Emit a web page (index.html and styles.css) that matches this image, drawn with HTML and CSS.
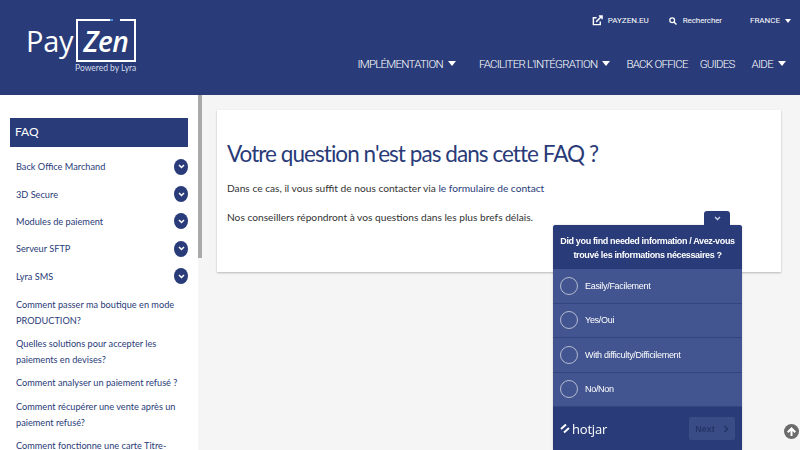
FILE: index.html
```html
<!DOCTYPE html>
<html lang="fr">

<head>
    <meta charset="UTF-8">
    <meta name="viewport" content="width=device-width, initial-scale=1.0">
    <title>PayZen - FAQ</title>
    <link rel="stylesheet" href="styles.css">
</head>

<body>
    <header class="site-header">
        <a class="logo" href="#">
            <span class="logo-pay">Pay</span>
            <span class="logo-box">
                <svg class="logo-frame" width="60" height="43" viewBox="0 0 60 43">
                    <path d="M34 1H1V42H59V1H44" fill="none" stroke="#fff" stroke-width="2" />
                    <path d="M34 1H37" stroke="#4a90d9" stroke-width="2" />
                </svg>
                <span class="logo-zen">Zen</span>
            </span>
            <span class="logo-sub">Powered by Lyra</span>
        </a>

        <div class="header-right">
            <div class="top-links">
                <a class="top-link payzen-link" href="#">
                    <svg width="11" height="11" viewBox="0 0 12 12">
                        <path d="M9 7V10.5H1.5V3H5" fill="none" stroke="#fff" stroke-width="1.6" />
                        <path d="M4.5 7.5L10 2M7.5 1H11V4.5" fill="none" stroke="#fff" stroke-width="1.6" />
                    </svg>
                    PAYZEN.EU
                </a>
                <a class="top-link search-link" href="#">
                    <svg width="8" height="8" viewBox="0 0 10 10">
                        <circle cx="4" cy="4" r="3" fill="none" stroke="#fff" stroke-width="1.6" />
                        <path d="M6.2 6.2L9.3 9.3" stroke="#fff" stroke-width="1.8" />
                    </svg>
                    Rechercher
                </a>
                <a class="top-link lang-link" href="#">FRANCE <span class="caret small"></span></a>
            </div>
            <nav class="main-nav">
                <a href="#" class="nav-impl">IMPLÉMENTATION <span class="caret"></span></a>
                <a href="#" class="nav-fac">FACILITER L'INTÉGRATION <span class="caret"></span></a>
                <a href="#" class="nav-back">BACK OFFICE</a>
                <a href="#" class="nav-guides">GUIDES</a>
                <a href="#">AIDE <span class="caret"></span></a>
            </nav>
        </div>
    </header>

    <div class="page">
        <aside class="sidebar">
            <h3 class="side-title">FAQ</h3>
            <ul class="side-cats">
                <li>Back Office Marchand <span class="round-btn"><svg width="7" height="5" viewBox="0 0 7 5"><path d="M1 1L3.5 3.5L6 1" fill="none" stroke="#fff" stroke-width="1.5" /></svg></span></li>
                <li>3D Secure <span class="round-btn"><svg width="7" height="5" viewBox="0 0 7 5"><path d="M1 1L3.5 3.5L6 1" fill="none" stroke="#fff" stroke-width="1.5" /></svg></span></li>
                <li>Modules de paiement <span class="round-btn"><svg width="7" height="5" viewBox="0 0 7 5"><path d="M1 1L3.5 3.5L6 1" fill="none" stroke="#fff" stroke-width="1.5" /></svg></span></li>
                <li>Serveur SFTP <span class="round-btn"><svg width="7" height="5" viewBox="0 0 7 5"><path d="M1 1L3.5 3.5L6 1" fill="none" stroke="#fff" stroke-width="1.5" /></svg></span></li>
                <li>Lyra SMS <span class="round-btn"><svg width="7" height="5" viewBox="0 0 7 5"><path d="M1 1L3.5 3.5L6 1" fill="none" stroke="#fff" stroke-width="1.5" /></svg></span></li>
            </ul>
            <ul class="side-links">
                <li>Comment passer ma boutique en mode PRODUCTION?</li>
                <li>Quelles solutions pour accepter les paiements en devises?</li>
                <li>Comment analyser un paiement refusé ?</li>
                <li>Comment récupérer une vente après un paiement refusé?</li>
                <li>Comment fonctionne une carte Titre-Restaurant ?</li>
            </ul>
        </aside>
        <div class="side-scroll"><div class="side-thumb"></div></div>

        <main class="content">
            <section class="card">
                <h1>Votre question n'est pas dans cette FAQ ?</h1>
                <p>Dans ce cas, il vous suffit de nous contacter via <a href="#">le formulaire de contact</a></p>
                <p>Nos conseillers répondront à vos questions dans les plus brefs délais.</p>
            </section>
        </main>
    </div>

    <div class="poll">
        <div class="poll-tab">
            <svg width="7" height="5" viewBox="0 0 7 5"><path d="M1 1L3.5 3.5L6 1" fill="none" stroke="#c9d2e6" stroke-width="1.4" /></svg>
        </div>
        <div class="poll-question">Did you find needed information / Avez-vous trouvé les informations nécessaires ?</div>
        <div class="poll-option"><span class="radio"></span>Easily/Facilement</div>
        <div class="poll-option"><span class="radio"></span>Yes/Oui</div>
        <div class="poll-option"><span class="radio"></span>With difficulty/Difficilement</div>
        <div class="poll-option"><span class="radio"></span>No/Non</div>
        <div class="poll-footer">
            <span class="hotjar">
                <svg width="10" height="11" viewBox="0 0 10 11">
                    <path d="M1 6L6 1.5M4 9.5L9 5" fill="none" stroke="#fff" stroke-width="2" />
                </svg>
                hotjar
            </span>
            <span class="poll-next">Next
                <svg width="6" height="8" viewBox="0 0 6 8"><path d="M1.5 1L4.5 4L1.5 7" fill="none" stroke="#223468" stroke-width="1.6" /></svg>
            </span>
        </div>
    </div>

    <a class="to-top" href="#">
        <svg width="15" height="15" viewBox="0 0 15 15">
            <path d="M7.5 3L12 7.5L10.6 8.9L8.5 6.9V12H6.5V6.9L4.4 8.9L3 7.5Z" fill="#fff" />
        </svg>
    </a>
</body>

</html>
```
FILE: styles.css
```css
* {
    box-sizing: border-box;
}

html,
body {
    height: 100%;
}

body {
    margin: 0;
    height: 450px;
    overflow: hidden;
    font-family: "Lato", "Open Sans", sans-serif;
    background-color: #f5f5f5;
    color: #333;
}

a {
    color: inherit;
    text-decoration: none;
}

ul {
    list-style: none;
    margin: 0;
    padding: 0;
}

.site-header {
    height: 95px;
    background-color: #293b78;
    color: #fff;
    display: flex;
    justify-content: space-between;
}

.logo {
    position: relative;
    display: flex;
    align-items: flex-start;
    width: 110px;
    height: 76px;
    margin: 19px 0 0 26px;
}

.logo-pay {
    font-family: "Open Sans", sans-serif;
    font-weight: 500;
    font-size: 29px;
    letter-spacing: -0.3px;
    line-height: 40px;
    margin-top: 2px;
    width: 50px;
}

.logo-box {
    position: relative;
    width: 60px;
    height: 43px;
    display: flex;
    justify-content: center;
}

.logo-frame {
    position: absolute;
    left: 0;
    top: 0;
}

.logo-zen {
    font-family: "Open Sans", sans-serif;
    font-style: italic;
    font-weight: 600;
    font-size: 28px;
    letter-spacing: -0.5px;
    line-height: 36px;
    position: relative;
    margin-top: 4px;
}

.logo-sub {
    position: absolute;
    left: 49px;
    top: 43px;
    font-size: 8.5px;
    line-height: 12px;
    color: #d5daea;
    white-space: nowrap;
}

.header-right {
    display: flex;
    flex-direction: column;
    align-items: flex-end;
    padding-right: 9px;
}

.top-links {
    display: flex;
    align-items: center;
    height: 21px;
    margin-top: 10px;
    font-family: "Roboto", sans-serif;
    font-size: 8px;
}

.top-link {
    display: flex;
    align-items: center;
}

.payzen-link svg {
    margin-right: 5px;
}

.payzen-link {
    margin-right: 20px;
}

.search-link svg {
    margin-right: 6px;
}

.search-link {
    margin-right: 28px;
    letter-spacing: -0.1px;
}

.lang-link .caret {
    margin-left: 5px;
}

.main-nav {
    display: flex;
    align-items: center;
    margin-top: 21px;
    margin-right: 5px;
    height: 24px;
    font-family: "Roboto", sans-serif;
    font-weight: 300;
    font-size: 11.5px;
    letter-spacing: -0.75px;
    white-space: nowrap;
}

.nav-impl {
    margin-right: 23px;
}

.nav-fac {
    margin-right: 16px;
}

.nav-back {
    margin-right: 12px;
}

.nav-guides {
    margin-right: 17px;
}

.caret {
    display: inline-block;
    width: 0;
    height: 0;
    margin-left: 3px;
    vertical-align: 2px;
    border-left: 4.5px solid transparent;
    border-right: 4.5px solid transparent;
    border-top: 5px solid #fff;
}

.caret.small {
    border-left-width: 3.5px;
    border-right-width: 3.5px;
    border-top-width: 4px;
    vertical-align: 1px;
}

.page {
    display: flex;
    height: 355px;
}

.sidebar {
    width: 198px;
    height: 355px;
    overflow: hidden;
    background-color: #fff;
    padding: 23px 10px 0;
}

.side-title {
    margin: 0;
    height: 29px;
    line-height: 28px;
    padding-left: 5px;
    background-color: #293b78;
    color: #fff;
    font-size: 12px;
    font-weight: 400;
}

.side-cats {
    margin-top: 6px;
}

.side-cats li {
    display: flex;
    justify-content: space-between;
    align-items: center;
    height: 27.4px;
    padding-left: 6px;
    font-size: 9.2px;
    color: #293b78;
}

.round-btn {
    width: 14px;
    height: 16px;
    border-radius: 50%;
    background-color: #293b78;
    display: flex;
    align-items: center;
    justify-content: center;
}

.side-links {
    padding: 0 10px 0 6px;
    margin-top: 7px;
    font-size: 9.2px;
    line-height: 15.8px;
    color: #293b78;
}

.side-links li {
    margin-bottom: 7.6px;
}

.side-scroll {
    width: 19px;
    flex-shrink: 0;
    background-color: #f5f5f5;
}

.side-thumb {
    width: 4px;
    height: 163px;
    background-color: #a9a9a9;
}

.content {
    flex: 1;
    padding: 15px 19px 0 0;
}

.card {
    height: 162px;
    background-color: #fff;
    box-shadow: 0 1px 2px rgba(0, 0, 0, 0.25);
    padding: 29px 10px 0;
}

.card h1 {
    margin: 0 0 12px;
    font-size: 22.5px;
    letter-spacing: -0.95px;
    line-height: 30px;
    font-weight: 400;
    color: #293b78;
}

.card p {
    margin: 0 0 15px;
    font-size: 10.2px;
    line-height: 14px;
    color: #333;
}

.card p a {
    color: #293b78;
}

.poll {
    position: fixed;
    left: 553px;
    top: 225px;
    width: 189px;
    height: 225px;
    background-color: #425590;
    color: #fff;
    border-radius: 3px 3px 0 0;
    font-family: "Liberation Sans", sans-serif;
    box-shadow: 0 0 2px rgba(0, 0, 0, 0.2);
}

.poll-tab {
    position: absolute;
    right: 12px;
    top: -14px;
    width: 26px;
    height: 14px;
    background-color: #293b78;
    border-radius: 3px 3px 0 0;
    display: flex;
    align-items: center;
    justify-content: center;
}

.poll-question {
    height: 44px;
    padding: 9px 3px 0;
    background-color: #293b78;
    border-radius: 3px 3px 0 0;
    text-align: center;
    font-size: 9px;
    letter-spacing: -0.36px;
    font-weight: 700;
    line-height: 14px;
}

.poll-option {
    height: 34.5px;
    display: flex;
    align-items: center;
    padding-left: 7px;
    font-size: 9px;
    letter-spacing: -0.3px;
    border-bottom: 1px solid #32457f;
}

.radio {
    width: 18px;
    height: 18px;
    margin-right: 7px;
    border: 1.5px solid #b4bbd0;
    border-radius: 50%;
    flex-shrink: 0;
}

.poll-footer {
    height: 43px;
    background-color: #293b78;
    display: flex;
    align-items: center;
    justify-content: space-between;
    padding: 0 7px 0 7px;
}

.hotjar {
    display: flex;
    align-items: center;
    gap: 2px;
    font-family: "Open Sans", sans-serif;
    font-size: 13px;
    letter-spacing: -0.2px;
}

.poll-next {
    width: 46px;
    height: 23px;
    display: flex;
    align-items: center;
    justify-content: center;
    gap: 8px;
    background-color: #3a4c86;
    border-radius: 2px;
    color: #223468;
    font-size: 9px;
    font-weight: 700;
}

.to-top {
    position: fixed;
    left: 784px;
    top: 424px;
    width: 15px;
    height: 15px;
    border-radius: 50%;
    background-color: #6b6b6b;
    display: flex;
}
```
